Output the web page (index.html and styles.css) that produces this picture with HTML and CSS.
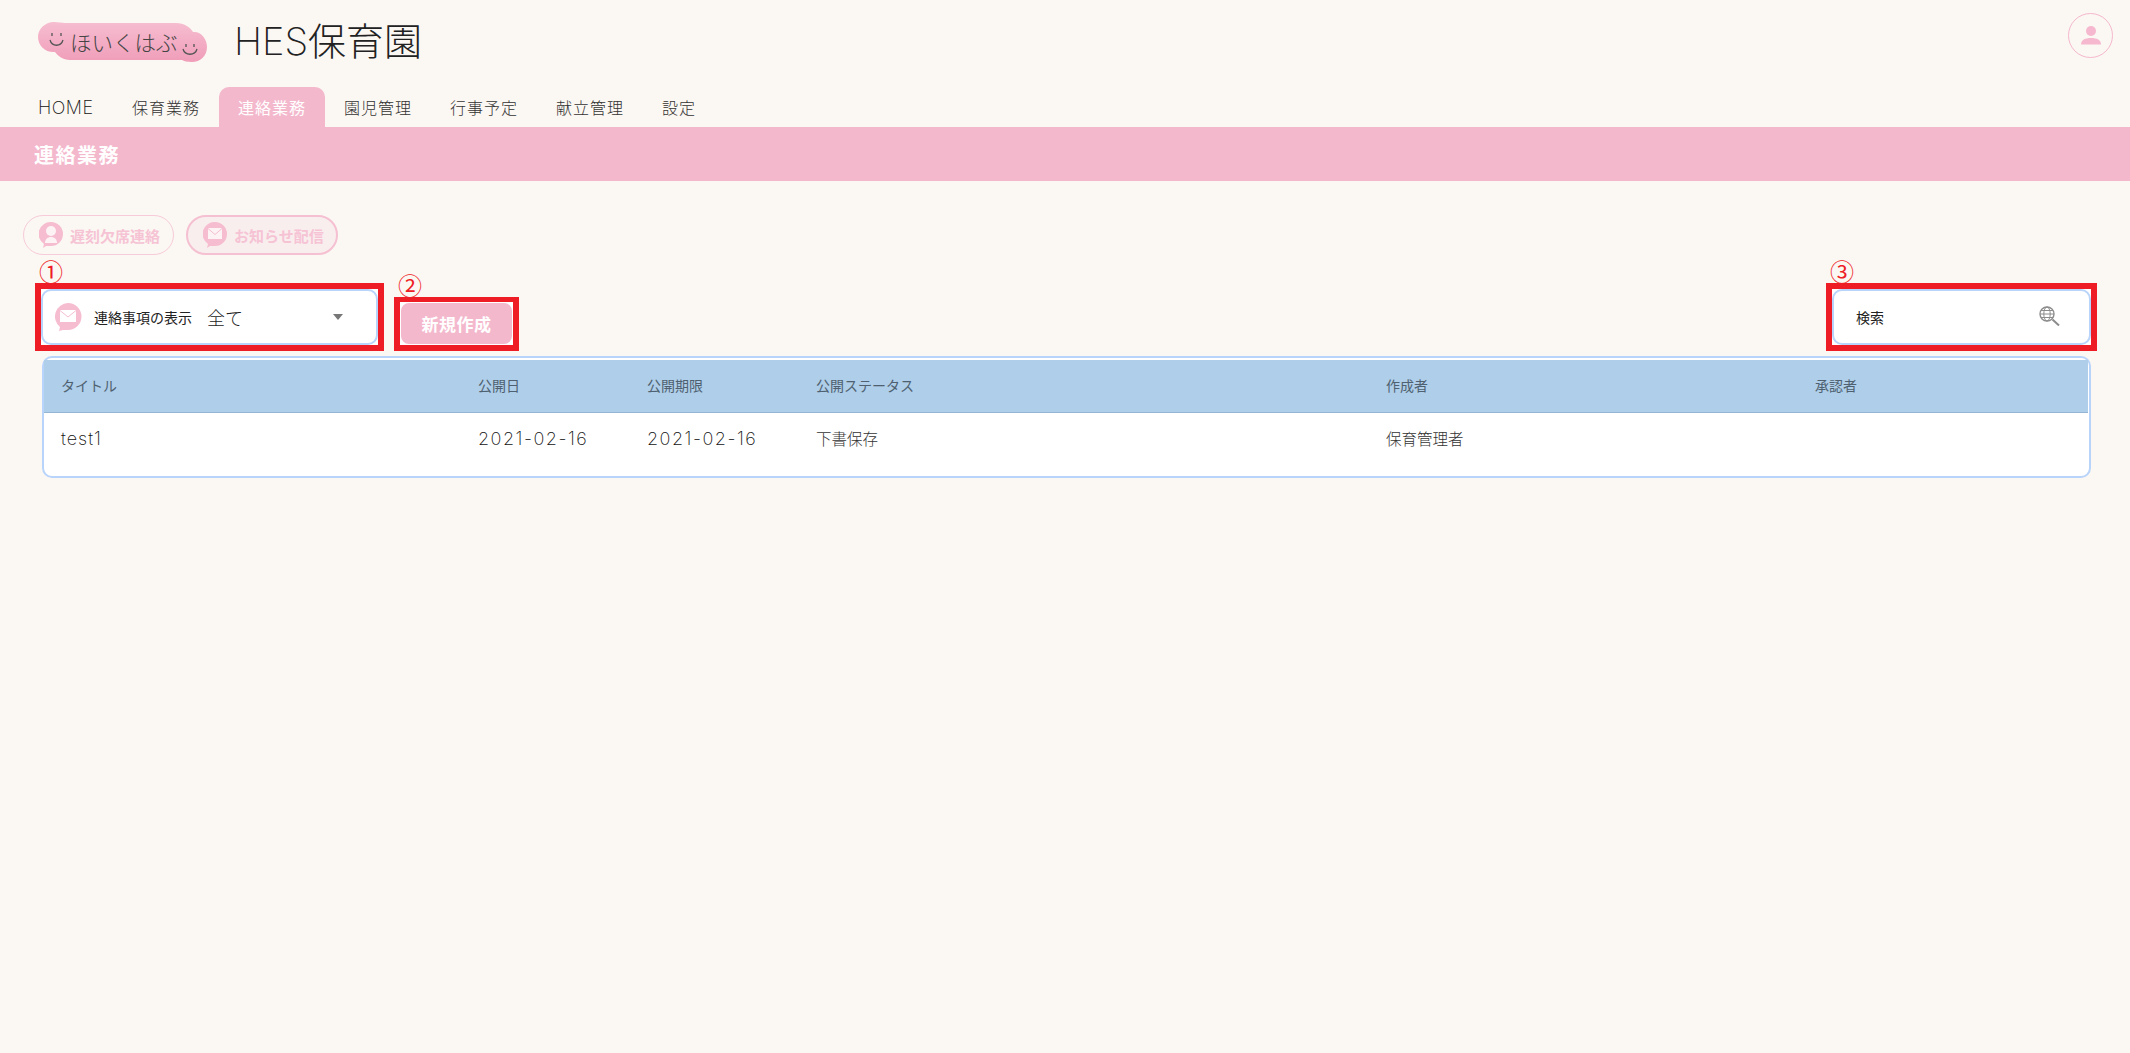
FILE: index.html
```html
<!DOCTYPE html>
<html lang="ja">
<head>
    <meta charset="UTF-8">
    <title>連絡業務</title>
    <link rel="stylesheet" href="styles.css">
</head>
<body>
    <header class="site-header">
        <div class="brand">
            <svg class="logo" width="170" height="42" viewBox="0 0 170 42">
                <defs>
                    <linearGradient id="logoFill" x1="0" y1="0" x2="0" y2="1">
                        <stop offset="0" stop-color="#f6bdd0"/>
                        <stop offset="1" stop-color="#f09db9"/>
                    </linearGradient>
                </defs>
                <path fill="url(#logoFill)" d="M16 0C20 0 24 1 27 1H138C146 1 152 5 155 10C163 9 169 17 169 25C169 34 162 40 154 40C149 40 146 39 144 38H32C25 38 20 34 17 30C8 31 0 24 0 15C0 7 7 0 16 0Z"/>
                <path class="logo-smile" d="M14 11V14M23 11V14M12 18C14 25 23 25 25 18"/>
                <path class="logo-smile" d="M148 22V25M156 22V25M145 27C147 34 157 34 159 27"/>
                <text class="logo-text" x="32" y="29">ほいくはぶ</text>
            </svg>
            <div class="school-name">HES保育園</div>
        </div>
        <a class="avatar" href="#">
            <svg width="20" height="19" viewBox="0 0 20 19">
                <circle cx="10" cy="5" r="5" fill="#f5b8cf"/>
                <path fill="#f5b8cf" d="M0 18.500C0 14 4 12 10 12S20 14 20 18.500Z"/>
            </svg>
        </a>
    </header>

    <nav class="main-nav">
        <a href="#" class="nav-home">HOME</a>
        <a href="#">保育業務</a>
        <a href="#" class="active">連絡業務</a>
        <a href="#">園児管理</a>
        <a href="#">行事予定</a>
        <a href="#">献立管理</a>
        <a href="#">設定</a>
    </nav>
    <h1 class="page-title">連絡業務</h1>

    <div class="pill-row">
        <a href="#" class="pill">
            <svg class="pill-icon" width="24" height="26" viewBox="0 0 24 26">
                <path fill="#f6bdd0" d="M12 0A12 12 0 0 1 12 24H7L4 26L5 22A12 12 0 0 1 12 0Z"/>
                <circle cx="12" cy="9" r="5" fill="#fdf3f5"/>
                <path fill="#fdf3f5" d="M6 21C6 17 9 15 12 15S18 17 18 21Z"/>
            </svg>
            遅刻欠席連絡
        </a>
        <a href="#" class="pill pill-current">
            <svg class="pill-icon" width="24" height="26" viewBox="0 0 24 26">
                <path fill="#f6bdd0" d="M12 0A12 12 0 0 1 12 24H7L4 26L5 22A12 12 0 0 1 12 0Z"/>
                <rect x="5" y="6" width="14" height="11" fill="#fdf3f5"/>
                <path fill="none" stroke="#f6bdd0" d="M5 6.500L12 12.500L19 6.500"/>
            </svg>
            お知らせ配信
        </a>
    </div>

    <div class="toolbar">
        <div class="tool">
            <div class="tool-number">①</div>
            <div class="tool-mark">
                <div class="field field-select">
                    <svg class="field-icon" width="28" height="28" viewBox="0 0 28 28">
                        <path fill="#f6bdd0" d="M14 0A13.500 13.500 0 0 1 14 27H9L5 28L6 24A13.500 13.500 0 0 1 14 0Z"/>
                        <rect x="6" y="7" width="16" height="12" fill="#fff"/>
                        <path fill="none" stroke="#f6bdd0" d="M6 7.500L14 14L22 7.500"/>
                    </svg>
                    <span class="field-label">連絡事項の表示</span>
                    <span class="field-value">全て</span>
                    <span class="field-arrow"></span>
                </div>
            </div>
        </div>
        <div class="tool">
            <div class="tool-number">②</div>
            <div class="tool-mark tool-mark-button">
                <a href="#" class="new-button">新規作成</a>
            </div>
        </div>
        <div class="tool tool-right">
            <div class="tool-number">③</div>
            <div class="tool-mark">
                <div class="field field-search">
                    <span class="field-label">検索</span>
                    <svg class="search-icon" width="21" height="20" viewBox="0 0 21 20" fill="none" stroke="#8c8c8c">
                        <circle cx="8" cy="8" r="7" stroke-width="1.400"/>
                        <ellipse cx="8" cy="8" rx="3.200" ry="7"/>
                        <path d="M1 8H15M2 4.500H14M2 11.500H14"/>
                        <path stroke-width="2" d="M13.500 13.500L20 19.500"/>
                    </svg>
                </div>
            </div>
        </div>
    </div>

    <div class="list-box">
        <table class="list-table">
            <thead>
                <tr>
                    <th class="col-title">タイトル</th>
                    <th class="col-date">公開日</th>
                    <th class="col-date">公開期限</th>
                    <th class="col-status">公開ステータス</th>
                    <th class="col-author">作成者</th>
                    <th>承認者</th>
                </tr>
            </thead>
            <tbody>
                <tr>
                    <td class="cell-latin">test1</td>
                    <td class="cell-latin cell-date">2021-02-16</td>
                    <td class="cell-latin cell-date">2021-02-16</td>
                    <td>下書保存</td>
                    <td>保育管理者</td>
                    <td></td>
                </tr>
            </tbody>
        </table>
    </div>
</body>
</html>
```

FILE: styles.css
```css
body {
    font-family: "Noto Sans CJK JP", "Noto Sans", sans-serif;
    margin: 0;
    background-color: #fbf7f2;
    color: #333;
    font-weight: 300;
}
a {
    text-decoration: none;
    color: inherit;
}
.site-header {
    display: flex;
    justify-content: space-between;
    padding: 13px 17px 0 38px;
    height: 74px;
}
.brand {
    display: flex;
    align-items: flex-start;
    padding-top: 9px;
}
.logo-smile {
    fill: none;
    stroke: #555;
    stroke-width: 1.3;
}
.logo-text {
    font-size: 21.500px;
    fill: #444;
}
.school-name {
    margin-left: 26px;
    font-family: Inter, "Noto Sans CJK JP", sans-serif;
    font-size: 38px;
    font-weight: 200;
    line-height: 38px;
    color: #222;
}
.avatar {
    width: 43px;
    height: 43px;
    border: 1px solid #f5b8cf;
    border-radius: 50%;
    display: flex;
    align-items: center;
    justify-content: center;
}
.main-nav {
    display: flex;
    padding-left: 19px;
    height: 40px;
}
.main-nav a {
    padding: 0 19px;
    font-size: 16px;
    letter-spacing: 1px;
    line-height: 40px;
    border-radius: 10px 10px 0 0;
}
.main-nav .nav-home {
    width: 56px;
    font-family: Inter, sans-serif;
    font-size: 18px;
    font-weight: 200;
    letter-spacing: 0.500px;
    line-height: 41px;
    color: #111;
}
.main-nav .active {
    background-color: #f4b8cd;
    color: #fff;
    font-weight: 400;
}
.page-title {
    margin: 0;
    height: 54px;
    padding-left: 34px;
    background-color: #f4b8cd;
    color: #fff;
    font-size: 20px;
    font-weight: 700;
    letter-spacing: 1.500px;
    line-height: 56px;
}
.pill-row {
    display: flex;
    gap: 12px;
    margin: 34px 0 0 23px;
}
.pill {
    display: flex;
    align-items: center;
    gap: 7px;
    box-sizing: border-box;
    width: 151px;
    height: 40px;
    padding-left: 15px;
    border: 1.500px solid #f7cbda;
    border-radius: 20px;
    color: #f6c3d5;
    font-size: 15px;
    font-weight: 700;
}
.pill-current {
    width: 152px;
    border: 2px solid #f5c0d2;
    background-color: #f9eeee;
}
.toolbar {
    display: flex;
    align-items: flex-end;
    gap: 10px;
    margin-top: 4px;
    padding: 0 33px 0 35px;
}
.tool-right {
    margin-left: auto;
}
.tool-number {
    margin-bottom: 1px;
    padding-left: 4px;
    color: #ee1c25;
    font-size: 24px;
    font-weight: 400;
    line-height: 23px;
}
.tool-mark {
    border: 6px solid #ee1c25;
    background-color: #fff;
}
.tool-mark-button {
    padding: 1px;
    border-width: 5px 6px 6px;
}
.field {
    display: flex;
    align-items: center;
    box-sizing: border-box;
    height: 56px;
    border: 2px solid #b9d4fb;
    border-radius: 10px;
    background-color: #fff;
}
.field-select {
    width: 337px;
    padding-left: 11px;
}
.field-search {
    justify-content: space-between;
    width: 259px;
    padding-left: 22px;
    padding-right: 29px;
}
.search-icon {
    margin-bottom: 3px;
}
.field-label {
    margin-left: 12px;
    color: #222;
    font-size: 14px;
    font-weight: 400;
}
.field-search .field-label {
    margin-left: 0;
}
.field-value {
    margin-left: 15px;
    color: #222;
    font-size: 18px;
}
.field-arrow {
    margin-left: 90px;
    border-style: solid;
    border-width: 6px 5.500px 0;
    border-color: #777 transparent transparent;
}
.new-button {
    display: block;
    width: 111px;
    height: 41px;
    border-radius: 8px;
    background-color: #f4b8cd;
    color: #fff;
    font-size: 17px;
    font-weight: 700;
    letter-spacing: 0.500px;
    text-align: center;
    line-height: 41px;
}
.list-box {
    margin: 5px 39px 0 42px;
    border: 2px solid #b9d4fb;
    border-radius: 10px;
    padding: 2px 1px 0 0;
    background-color: #fff;
    height: 116px;
}
.list-table {
    width: 100%;
    border-collapse: collapse;
    table-layout: fixed;
}
.list-table th {
    height: 50px;
    padding: 0 0 2px 17px;
    border-bottom: 1px solid #94b6d2;
    background-color: #aecee9;
    color: #4f6170;
    font-size: 14px;
    font-weight: 400;
    text-align: left;
}
.list-table td {
    padding: 14px 0 0 17px;
    color: #333;
    font-size: 15.500px;
}
.col-title {
    width: 400px;
}
.col-date {
    width: 152px;
}
.col-status {
    width: 553px;
}
.col-author {
    width: 412px;
}
.list-table .cell-latin {
    font-family: Inter, "Noto Sans CJK JP", sans-serif;
    font-size: 18px;
    font-weight: 200;
    letter-spacing: 1px;
    color: #111;
}
.list-table .cell-date {
    letter-spacing: 1.500px;
}
```
